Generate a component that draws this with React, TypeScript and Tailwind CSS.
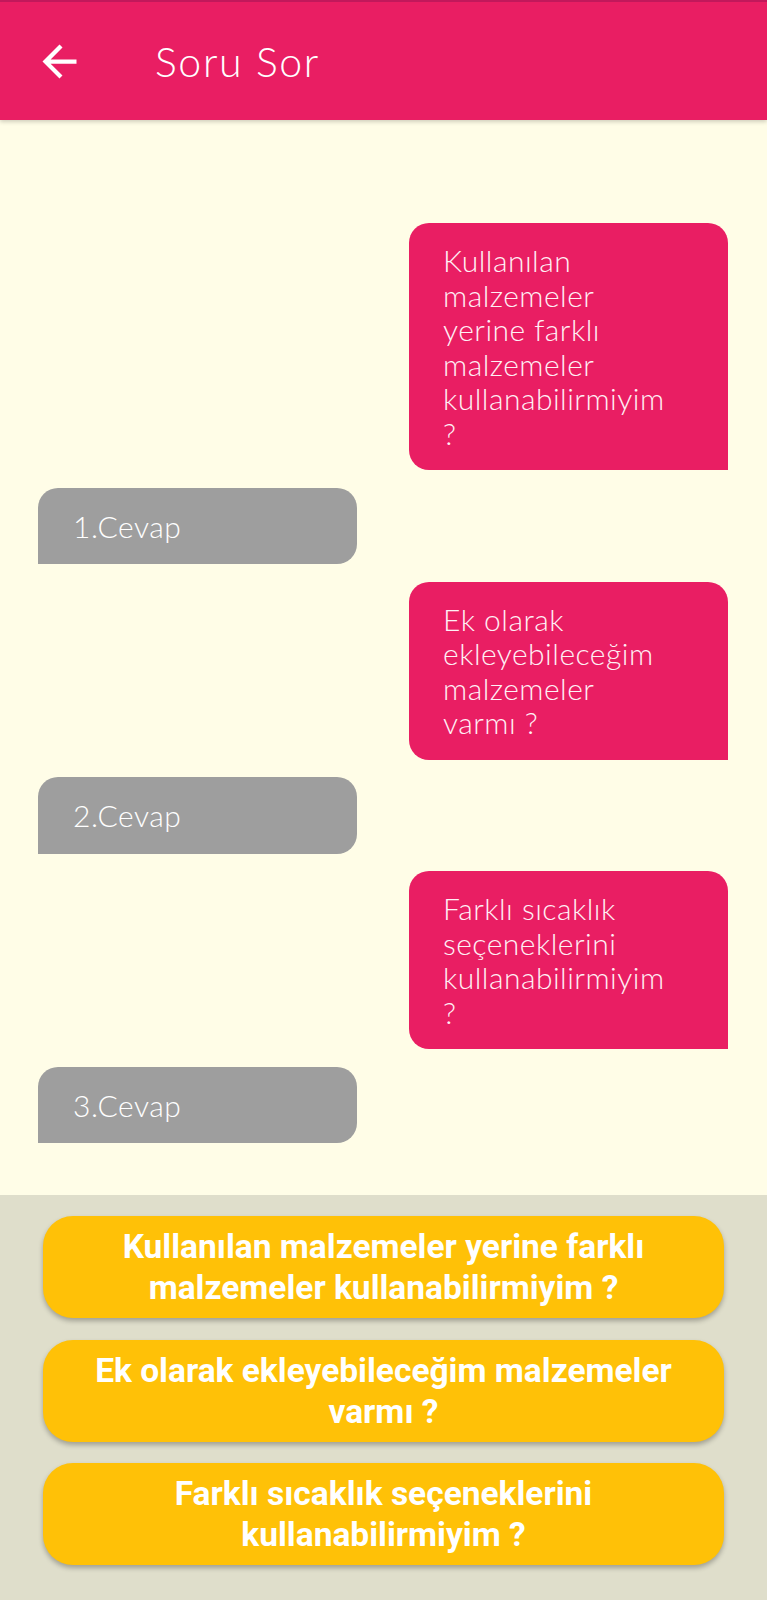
import React from "react";

const questions: string[][] = [
  ["Kullanılan", "malzemeler", "yerine farklı", "malzemeler", "kullanabilirmiyim", "?"],
  ["Ek olarak", "ekleyebileceğim", "malzemeler", "varmı ?"],
  ["Farklı sıcaklık", "seçeneklerini", "kullanabilirmiyim", "?"],
];

const answers = ["1.Cevap", "2.Cevap", "3.Cevap"];

const buttons: string[][] = [
  ["Kullanılan malzemeler yerine farklı", "malzemeler kullanabilirmiyim ?"],
  ["Ek olarak ekleyebileceğim malzemeler", "varmı ?"],
  ["Farklı sıcaklık seçeneklerini", "kullanabilirmiyim ?"],
];

function Lines({ lines }: { lines: string[] }) {
  return (
    <>
      {lines.map((l, i) => (
        <React.Fragment key={i}>
          {l}
          {i < lines.length - 1 && <br />}
        </React.Fragment>
      ))}
    </>
  );
}

export default function App() {
  return (
    <div className="w-[767px] min-h-[1600px] flex flex-col bg-[#FFFDE7]">
      <header className="h-[120px] shrink-0 bg-[#E91E63] border-t-2 border-[#C2185B] flex items-center pl-[34px] shadow-[0_2px_4px_rgba(0,0,0,0.18)] relative z-10">
        <svg width="51" height="51" viewBox="0 0 24 24" fill="#ffffff">
          <path d="M20 11H7.83l5.59-5.59L12 4l-8 8 8 8 1.41-1.41L7.83 13H20v-2z" />
        </svg>
        <h1 className="ml-[70px] text-white text-[41px] leading-none tracking-[0.04em] font-['Lato',sans-serif] font-light">
          Soru Sor
        </h1>
      </header>

      <main className="flex-1 flex flex-col gap-[17.5px] pt-[103px] px-[38px] font-['Lato',sans-serif] font-light tracking-[0.03em]">
        {questions.map((q, i) => (
          <React.Fragment key={i}>
            <div className="self-end mr-[1px] w-[319px] bg-[#E91E63] text-[#FFF0F5] text-[30px] leading-[34.5px] px-[34px] py-[20px] rounded-tl-[20px] rounded-tr-[20px] rounded-bl-[20px]">
              <Lines lines={q} />
            </div>
            <div className="self-start w-[319px] bg-[#9E9E9E] text-white text-[30px] leading-[34.5px] px-[35px] py-[21px] rounded-tl-[20px] rounded-tr-[20px] rounded-br-[20px]">
              {answers[i]}
            </div>
          </React.Fragment>
        ))}
      </main>

      <section className="h-[405px] shrink-0 bg-[#DFDECB] flex flex-col gap-[21.5px] pt-[21px] px-[43px]">
        {buttons.map((b, i) => (
          <button
            key={i}
            className="h-[102px] w-full rounded-[30px] bg-[#FFC107] text-white text-[33.5px] leading-[41px] font-bold font-['Roboto',sans-serif] text-center flex items-center justify-center shadow-[0_3px_5px_rgba(0,0,0,0.28)]"
          >
            <span>
              <Lines lines={b} />
            </span>
          </button>
        ))}
      </section>
    </div>
  );
}
